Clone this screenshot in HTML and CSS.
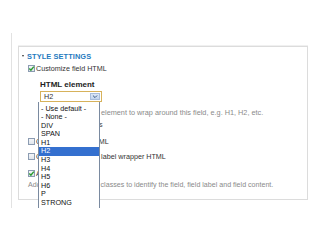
FILE: index.html
```
<!DOCTYPE html>
<html lang="en">

<head>
    <meta charset="UTF-8">
    <title>Style settings</title>
    <link rel="stylesheet" href="styles.css">
</head>

<body>
    <div class="page">
        <div class="fieldset">
            <div class="legend"><span class="toggle"></span>STYLE SETTINGS</div>

            <div class="check-row">
                <span class="checkbox checked"><svg viewBox="0 0 7 7"><path d="M1.3 3.6 L2.9 5.2 L5.8 1.6" /></svg></span>
                <span class="check-label">Customize field HTML</span>
            </div>

            <div class="nested">
                <div class="field-label">HTML element</div>
                <div class="select">
                    <span class="select-value">H2</span>
                    <span class="select-arrow"><svg viewBox="0 0 8 6"><path d="M1.5 1.8 L4 4.3 L6.5 1.8" /></svg></span>
                </div>
                <div class="description">Choose the HTML element to wrap around this field, e.g. H1, H2, etc.</div>
                <div class="nested-label">Create a CSS class</div>
            </div>

            <div class="check-row row-label">
                <span class="checkbox"></span>
                <span class="check-label">Customize label HTML</span>
            </div>
            <div class="check-row row-wrapper">
                <span class="checkbox"></span>
                <span class="check-label">Customize field and label wrapper HTML</span>
            </div>
            <div class="check-row row-classes">
                <span class="checkbox checked"><svg viewBox="0 0 7 7"><path d="M1.3 3.6 L2.9 5.2 L5.8 1.6" /></svg></span>
                <span class="check-label">Add default classes</span>
            </div>
            <div class="description classes-help">Add the default Drupal classes to identify the field, field label and field content.</div>

            <ul class="dropdown">
                <li>- Use default -</li>
                <li>- None -</li>
                <li>DIV</li>
                <li>SPAN</li>
                <li>H1</li>
                <li class="selected">H2</li>
                <li>H3</li>
                <li>H4</li>
                <li>H5</li>
                <li>H6</li>
                <li>P</li>
                <li>STRONG</li>
            </ul>
        </div>
    </div>
</body>

</html>
```

FILE: styles.css
```
body {
    margin: 0;
    background-color: #fff;
    font-family: 'Liberation Sans', Arial, sans-serif;
    color: #333;
}

.page {
    margin: 33px 0 0 11px;
    height: 175px;
    padding: 13px 0 0 6px;
    box-sizing: border-box;
    border-left: 1px solid #e2e2e2;
    overflow: hidden;
}

.fieldset {
    position: relative;
    width: 290px;
    height: 154px;
    box-sizing: border-box;
    border: 1px solid #dcdcdc;
    box-shadow: 0 -1px 0 #f0f0f0;
    padding: 4px 0 0 2px;
}

.legend {
    display: flex;
    align-items: center;
    height: 10px;
    font-size: 7.4px;
    font-weight: bold;
    color: #1f7bc0;
    letter-spacing: 0.1px;
}

.toggle {
    width: 0;
    height: 0;
    margin: 0 3px 0 1px;
    border-left: 1.5px solid transparent;
    border-right: 1.5px solid transparent;
    border-top: 2.5px solid #333;
}

.check-row {
    display: flex;
    align-items: center;
    height: 10px;
    margin: 2px 0 0 7px;
    font-size: 7.2px;
}

.checkbox {
    width: 7px;
    height: 7px;
    margin-right: 1px;
    box-sizing: border-box;
    border: 1px solid #8c9cb2;
    background: linear-gradient(#f4f6f9, #dfe5ec);
}

.checkbox svg {
    display: block;
    width: 7px;
    height: 7px;
    margin: -1px;
}

.checkbox svg path {
    fill: none;
    stroke: #2a9b2e;
    stroke-width: 1.4;
}

.check-label {
    color: #333;
}

.nested {
    padding: 7px 0 0 19px;
}

.field-label {
    height: 10px;
    line-height: 10px;
    font-size: 8px;
    font-weight: bold;
    color: #222;
}

.select {
    display: flex;
    align-items: center;
    justify-content: space-between;
    width: 62px;
    height: 11px;
    margin-top: 1px;
    box-sizing: border-box;
    border: 1px solid #d7b25b;
    padding: 0 1px 0 3px;
    font-size: 7.2px;
}

.select-arrow {
    width: 10px;
    height: 7px;
    box-sizing: border-box;
    border: 1px solid #a9bddb;
    background: linear-gradient(#dde8f6, #c2d4ee);
}

.select-arrow svg {
    display: block;
    width: 8px;
    height: 5px;
}

.select-arrow svg path {
    fill: none;
    stroke: #3b5a86;
    stroke-width: 1.2;
}

.description {
    height: 10px;
    line-height: 10px;
    margin-top: 6px;
    font-size: 7.3px;
    color: #8a8a8a;
    white-space: nowrap;
}

.nested-label {
    height: 10px;
    line-height: 10px;
    margin-top: 2px;
    font-size: 7.2px;
    color: #444;
}

.row-label {
    margin-top: 6px;
}

.row-wrapper {
    margin-top: 5px;
}

.row-classes {
    margin-top: 7px;
}

.classes-help {
    margin: 2px 0 0 7px;
    font-size: 7.1px;
}

.dropdown {
    position: absolute;
    left: 19px;
    top: 55px;
    width: 62px;
    margin: 0;
    padding: 2.5px 0 0;
    box-sizing: border-box;
    list-style: none;
    background-color: #fff;
    border: 1px solid #7a8aa0;
    border-top: none;
    font-size: 7.2px;
    line-height: 8.6px;
    color: #111;
}

.dropdown li {
    padding-left: 2px;
    height: 8.6px;
}

.dropdown .selected {
    background-color: #3470cf;
    color: #fff;
}
```
